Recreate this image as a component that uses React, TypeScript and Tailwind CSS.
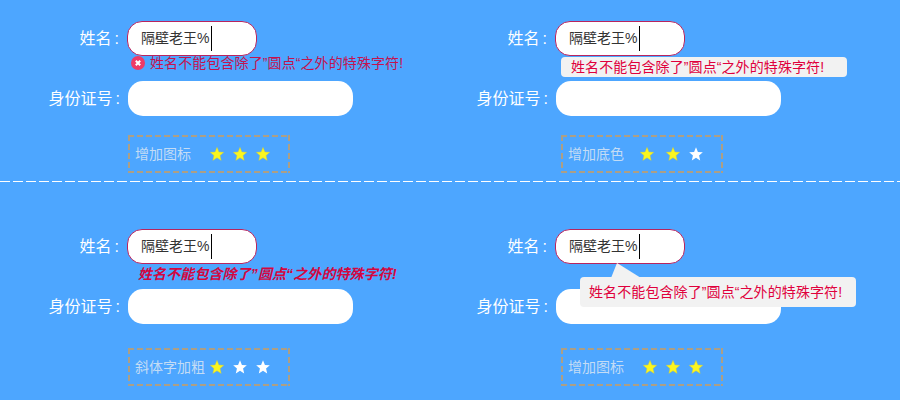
import React from "react";

const FONT = "font-['Liberation_Sans','Noto_Sans_CJK_SC',sans-serif]";
const MSG = "姓名不能包含除了\u201D圆点\u201C之外的特殊字符!";

function Star({ on, className }: { on: boolean; className?: string }) {
  return (
    <svg viewBox="0 0 16 16" className={`h-[14px] w-[14px] shrink-0 ${className ?? ""}`}>
      <polygon
        points="8,0.4 10.2,5.6 15.8,6.1 11.5,9.8 12.8,15.3 8,12.4 3.2,15.3 4.5,9.8 0.2,6.1 5.8,5.6"
        fill={on ? "#fbf61e" : "#ffffff"}
        stroke={on ? "#c9c84a" : "none"}
        strokeWidth="0.5"
      />
    </svg>
  );
}

function Label({ children, wide }: { children: React.ReactNode; wide?: boolean }) {
  return (
    <div className="flex w-[120px] shrink-0 justify-end text-[16px] leading-[35px] text-white">
      <span>{children}</span>
      <span className={wide ? "ml-[3px]" : "ml-[3px] mr-[1px]"}>:</span>
    </div>
  );
}

function NameRow() {
  return (
    <div className="flex h-[35px]">
      <Label>姓名</Label>
      <div className="ml-[7px] flex h-[35px] w-[130px] items-center rounded-[15px] border border-[#b8245f] bg-white pl-[13px] text-[14px] text-[#333333]">
        <span>隔壁老王%</span>
        <span className="ml-[2px] h-[25px] w-px bg-black" />
      </div>
    </div>
  );
}

function IdRow() {
  return (
    <div className="flex h-[35px]">
      <Label wide>身份证号</Label>
      <div className="ml-[8px] h-[35px] w-[225px] rounded-[15px] bg-white" />
    </div>
  );
}

function DemoBox({
  text,
  offset,
  textWidth,
  stars,
  secondGap,
}: {
  text: string;
  offset: string;
  textWidth: string;
  stars: boolean[];
  secondGap: string;
}) {
  return (
    <div
      className={`flex h-[38px] w-[162px] items-center pl-[7px] text-[14px] text-[#c3dcf5] [background:repeating-linear-gradient(to_right,#ad9f85_0,#ad9f85_6px,transparent_6px,transparent_9px)_left_top/100%_2px_no-repeat,repeating-linear-gradient(to_right,#ad9f85_0,#ad9f85_6px,transparent_6px,transparent_9px)_left_bottom/100%_2px_no-repeat,repeating-linear-gradient(to_bottom,#ad9f85_0,#ad9f85_6px,transparent_6px,transparent_9px)_left_top/2px_100%_no-repeat,repeating-linear-gradient(to_bottom,#ad9f85_0,#ad9f85_6px,transparent_6px,transparent_9px)_right_top/2px_100%_no-repeat] ${offset}`}
    >
      <span className={`shrink-0 ${textWidth}`}>{text}</span>
      <Star on={stars[0]} />
      <Star on={stars[1]} className={secondGap} />
      <Star on={stars[2]} className="ml-[9px]" />
    </div>
  );
}

export default function App() {
  return (
    <div className={`h-[400px] w-[900px] overflow-hidden bg-[#4da6ff] ${FONT}`}>
      <div className="grid h-[181px] grid-cols-[428px_472px] pt-[21px]">
        <div>
          <NameRow />
          <div className="flex h-[25px] items-start pl-[131px] text-[14px] leading-[14px] tracking-[0.1px] text-[#c4124f]">
            <svg viewBox="0 0 14 14" className="h-[14px] w-[14px] shrink-0">
              <circle cx="7" cy="7" r="7" fill="#ee3a66" />
              <path d="M4.8 4.8 L9.2 9.2 M9.2 4.8 L4.8 9.2" stroke="#ffffff" strokeWidth="2" />
            </svg>
            <span className="ml-[5px] whitespace-nowrap">{MSG}</span>
          </div>
          <IdRow />
          <div className="mt-[19px]">
            <DemoBox
              text="增加图标"
              offset="ml-[128px]"
              textWidth="w-[75px]"
              stars={[true, true, true]}
              secondGap="ml-[9px]"
            />
          </div>
        </div>
        <div>
          <NameRow />
          <div className="flex h-[25px] items-start pl-[133px] pt-[1px]">
            <div className="flex h-[20px] w-[286px] items-center rounded-[4px] bg-[#f2f2f2] pl-[10px] text-[14px] tracking-[0.1px] text-[#e0003c]">
              <span className="whitespace-nowrap">{MSG}</span>
            </div>
          </div>
          <IdRow />
          <div className="mt-[19px]">
            <DemoBox
              text="增加底色"
              offset="ml-[133px]"
              textWidth="w-[72px]"
              stars={[true, true, false]}
              secondGap="ml-[12px]"
            />
          </div>
        </div>
      </div>

      <div className="h-px w-full bg-[repeating-linear-gradient(to_right,#ffffff_0,#ffffff_10px,transparent_10px,transparent_13px)]" />

      <div className="grid h-[218px] grid-cols-[428px_472px] pt-[47px]">
        <div>
          <NameRow />
          <div className="h-[25px] pl-[138px] text-[14px] font-bold italic leading-[20px] tracking-[0.1px] text-[#d4063f]">
            <span className="whitespace-nowrap">{MSG}</span>
          </div>
          <IdRow />
          <div className="mt-[24px]">
            <DemoBox
              text="斜体字加粗"
              offset="ml-[128px]"
              textWidth="w-[75px]"
              stars={[true, false, false]}
              secondGap="ml-[9px]"
            />
          </div>
        </div>
        <div className="relative">
          <NameRow />
          <div className="h-[25px]" />
          <IdRow />
          <div className="mt-[24px]">
            <DemoBox
              text="增加图标"
              offset="ml-[133px]"
              textWidth="w-[75px]"
              stars={[true, true, true]}
              secondGap="ml-[9px]"
            />
          </div>
          <svg viewBox="0 0 30 15" className="absolute left-[183px] top-[34px] h-[15px] w-[30px]">
            <polygon points="0,15 6,0 30,15" fill="#f2f2f2" />
          </svg>
          <div className="absolute left-[152px] top-[48px] flex h-[30px] w-[276px] items-center rounded-[4px] bg-[#f2f2f2] pl-[9px] text-[14px] tracking-[0.1px] text-[#e0003c]">
            <span className="whitespace-nowrap">{MSG}</span>
          </div>
        </div>
      </div>
    </div>
  );
}
